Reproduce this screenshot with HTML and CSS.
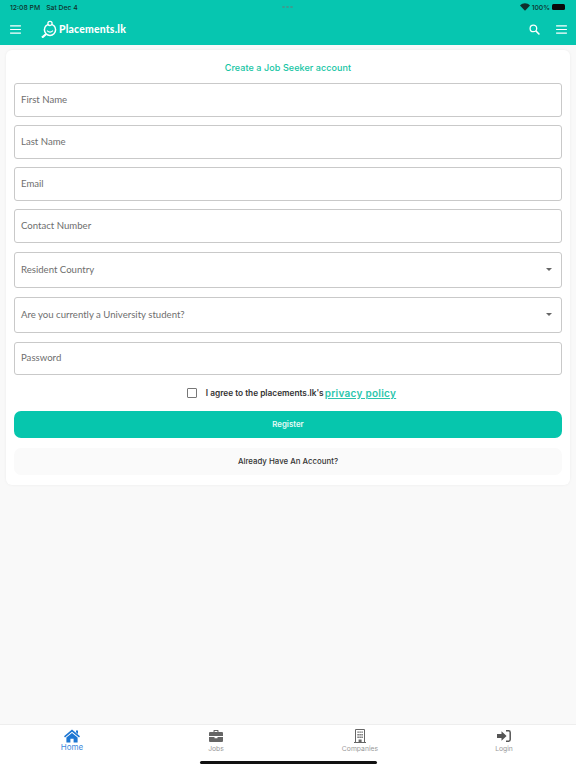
FILE: index.html
```html
<!DOCTYPE html>
<html lang="en">
<head>
  <meta charset="UTF-8" />
  <meta name="viewport" content="width=device-width, initial-scale=1.0"/>
  <title>Placements.lk - Register</title>
  <link rel="stylesheet" href="styles.css">
</head>
<body>

  <!-- Header -->
  <header class="header">
    <div class="status-bar">
      <div class="status-left">
        <span>12:08 PM</span>
        <span>Sat Dec 4</span>
      </div>
      <div class="status-dots"><i></i><i></i><i></i></div>
      <div class="status-right">
        <svg class="wifi" viewBox="0 0 12 9" width="10" height="8">
          <path fill="#10302c" d="M6 9 L0 2.6 C3.4 -.8 8.6 -.8 12 2.6 Z"/>
        </svg>
        <span>100%</span>
        <span class="battery"></span>
      </div>
    </div>
    <div class="app-bar">
      <svg class="menu-icon" viewBox="0 0 12 10" width="11" height="9">
        <path d="M0 1h12M0 5h12M0 9h12" stroke="#fff" stroke-width="1.2"/>
      </svg>
      <div class="logo">
        <svg viewBox="0 0 16 18" width="16" height="18">
          <circle cx="9" cy="9.8" r="5.6" fill="none" stroke="#fff" stroke-width="1.5"/>
          <path d="M6 10.6 Q9 13.6 12 10.6" fill="none" stroke="#fff" stroke-width="1.1"/>
          <circle cx="9" cy="3.4" r="2.1" fill="#06c6b0" stroke="#fff" stroke-width="1.3"/>
          <path d="M5.2 14 L1 17.6" stroke="#fff" stroke-width="2.2"/>
        </svg>
        <span>Placements.lk</span>
      </div>
      <div class="app-bar-right">
        <svg viewBox="0 0 12 12" width="11" height="11">
          <circle cx="4.8" cy="4.8" r="3.6" fill="none" stroke="#fff" stroke-width="1.4"/>
          <path d="M7.5 7.5 L11.4 11.4" stroke="#fff" stroke-width="1.6"/>
        </svg>
        <svg viewBox="0 0 12 10" width="11" height="9">
          <path d="M0 1h12M0 5h12M0 9h12" stroke="#fff" stroke-width="1.2"/>
        </svg>
      </div>
    </div>
  </header>

  <!-- Register form -->
  <main class="content">
    <form class="card">
      <h1 class="card-title">Create a Job Seeker account</h1>

      <div class="field">First Name</div>
      <div class="field">Last Name</div>
      <div class="field">Email</div>
      <div class="field field-last-text">Contact Number</div>
      <div class="field field-select">Resident Country <span class="caret"></span></div>
      <div class="field field-select">Are you currently a University student? <span class="caret"></span></div>
      <div class="field field-password">Password</div>

      <div class="agree">
        <span class="checkbox"></span>
        <span class="agree-text">I agree to the placements.lk's</span>
        <a class="policy" href="#">privacy policy</a>
      </div>

      <button class="btn btn-primary" type="button">Register</button>
      <button class="btn btn-light" type="button">Already Have An Account?</button>
    </form>
  </main>

  <!-- Bottom tabs -->
  <nav class="tabs">
    <div class="tab tab-active">
      <svg viewBox="0 0 16 13" width="16" height="13">
        <path fill="#1d76d2" d="M8 0 L16 6.8 L15 8 L8 2.2 L1 8 L0 6.8 Z M12 1h2v3.4l-2-1.7Z M8 3.4 L13.6 8 V13 H9.6 V9.2 H6.4 V13 H2.4 V8 Z"/>
      </svg>
      <span>Home</span>
    </div>
    <div class="tab">
      <svg viewBox="0 0 14 12" width="14" height="12">
        <path fill="#666" d="M4.5 2 V.6 Q4.5 0 5.1 0 H8.9 Q9.5 0 9.5 .6 V2 H13 Q14 2 14 3 V6 H0 V3 Q0 2 1 2 Z M5.6 1 V2 H8.4 V1 Z M0 7 H5.5 V8.2 H8.5 V7 H14 V11 Q14 12 13 12 H1 Q0 12 0 11 Z"/>
      </svg>
      <span>Jobs</span>
    </div>
    <div class="tab">
      <svg viewBox="0 0 12 14" width="12" height="14">
        <path fill="none" stroke="#666" stroke-width="1" d="M1.5 13.5 V.5 H10.5 V13.5 M0 13.5 H12"/>
        <path fill="#666" d="M3.4 2.4h1.4v1.4H3.4z M5.4 2.4h1.4v1.4H5.4z M7.4 2.4h1.4v1.4H7.4z M3.4 5h1.4v1.4H3.4z M5.4 5h1.4v1.4H5.4z M7.4 5h1.4v1.4H7.4z M3.4 7.6h1.4V9H3.4z M5.4 7.6h1.4V9H5.4z M7.4 7.6h1.4V9H7.4z M4.6 10.6h3v3h-3z"/>
      </svg>
      <span>Companies</span>
    </div>
    <div class="tab">
      <svg viewBox="0 0 14 12" width="14" height="12">
        <path fill="#555" d="M0 4 H4.5 V1.2 L9.6 6 L4.5 10.8 V8 H0 Z"/>
        <path fill="none" stroke="#555" stroke-width="1.5" d="M9 .8 H11.6 Q13.2 .8 13.2 2.4 V9.6 Q13.2 11.2 11.6 11.2 H9"/>
      </svg>
      <span>Login</span>
    </div>
    <div class="home-indicator"></div>
  </nav>

</body>
</html>
```

FILE: styles.css
```css
* {
  box-sizing: border-box;
  margin: 0;
  padding: 0;
}

html, body {
  height: 768px;
  overflow: hidden;
}

body {
  display: flex;
  flex-direction: column;
  font-family: Inter, "Liberation Sans", sans-serif;
  background: #f9f9f9;
  color: #333;
}

.header {
  height: 45px;
  background: #06c6b0;
  flex-shrink: 0;
}

.status-bar {
  height: 14px;
  padding: 0 11px 0 10px;
  display: flex;
  align-items: center;
  justify-content: space-between;
  position: relative;
  font-size: 6.8px;
  font-weight: 500;
  color: #10302c;
}

.status-left {
  display: flex;
  gap: 6px;
}

.status-dots {
  position: absolute;
  left: 282px;
  top: 6px;
  display: flex;
  gap: 1px;
}

.status-dots i {
  width: 3px;
  height: 2px;
  border-radius: 50%;
  background: #3f9b8f;
}

.status-right {
  display: flex;
  align-items: center;
  gap: 2px;
}

.battery {
  width: 13px;
  height: 6px;
  border-radius: 1.5px;
  background: #0a0a0a;
}

.app-bar {
  height: 31px;
  padding: 0 9px 1px 10px;
  display: flex;
  align-items: center;
}

.logo {
  margin-left: 20px;
  display: flex;
  align-items: center;
  gap: 2px;
  color: #fff;
  font-family: Lato, sans-serif;
  font-size: 10.4px;
  font-weight: 900;
  letter-spacing: 0.2px;
}

.app-bar-right {
  margin-left: auto;
  display: flex;
  align-items: center;
  gap: 16px;
}

.content {
  flex: 1;
  padding: 5px 6px 0;
}

.card {
  background: #fff;
  border-radius: 6px;
  height: 435px;
  padding: 12px 8px 0;
  box-shadow: 0 0 3px rgba(0,0,0,0.06);
}

.card-title {
  text-align: center;
  font-size: 9px;
  font-weight: 500;
  line-height: 11px;
  letter-spacing: 0.08px;
  color: #13c4a3;
  margin-bottom: 10px;
}

.field {
  height: 34px;
  margin-bottom: 8px;
  padding: 0 6px 2px;
  display: flex;
  align-items: center;
  border: 1px solid #c9c9c9;
  border-radius: 3px;
  font-family: Lato, sans-serif;
  font-size: 9.6px;
  color: #6e6e6e;
}

.field-last-text {
  margin-bottom: 9px;
}

.field-select {
  height: 36px;
  margin-bottom: 9px;
  justify-content: space-between;
  padding-right: 7px;
}

.field-password {
  height: 33px;
  margin-bottom: 11px;
}

.caret {
  margin-right: 2px;
  border-left: 3.5px solid transparent;
  border-right: 3.5px solid transparent;
  border-top: 3.5px solid #666;
}

.agree {
  height: 13px;
  padding-left: 7px;
  display: flex;
  align-items: center;
  justify-content: center;
}

.checkbox {
  width: 10px;
  height: 10px;
  margin-right: 9px;
  border: 1px solid #777;
  border-radius: 1px;
}

.agree-text {
  font-size: 8.3px;
  font-weight: 600;
  color: #333;
}

.policy {
  margin-left: 1px;
  font-size: 10px;
  font-weight: 600;
  letter-spacing: 0.28px;
  color: #2cc5ac;
  text-decoration-thickness: 1px;
}

.btn {
  display: block;
  width: 100%;
  height: 27px;
  padding-bottom: 2px;
  border: none;
  border-radius: 7px;
  font-family: Inter, sans-serif;
  font-size: 7.85px;
  font-weight: 500;
}

.btn-primary {
  margin-top: 12px;
  background: #06c6ad;
  color: #e6fbf7;
  font-weight: 600;
}

.btn-light {
  margin-top: 10px;
  background: #fafafa;
  color: #333;
}

.tabs {
  height: 44px;
  flex-shrink: 0;
  background: #fff;
  border-top: 1px solid #eee;
  display: flex;
  position: relative;
}

.tab {
  flex: 1;
  padding-top: 4px;
  display: flex;
  flex-direction: column;
  align-items: center;
  font-size: 6.8px;
  color: #999;
}

.tab svg {
  height: 14px;
}

.tab span {
  margin-top: 1px;
}

.tab-active {
  font-size: 8px;
  color: #3f8bdc;
}

.tab-active span {
  margin-top: -1px;
}

.home-indicator {
  position: absolute;
  left: 200px;
  bottom: 4px;
  width: 177px;
  height: 3px;
  border-radius: 2px;
  background: #111;
}
```
